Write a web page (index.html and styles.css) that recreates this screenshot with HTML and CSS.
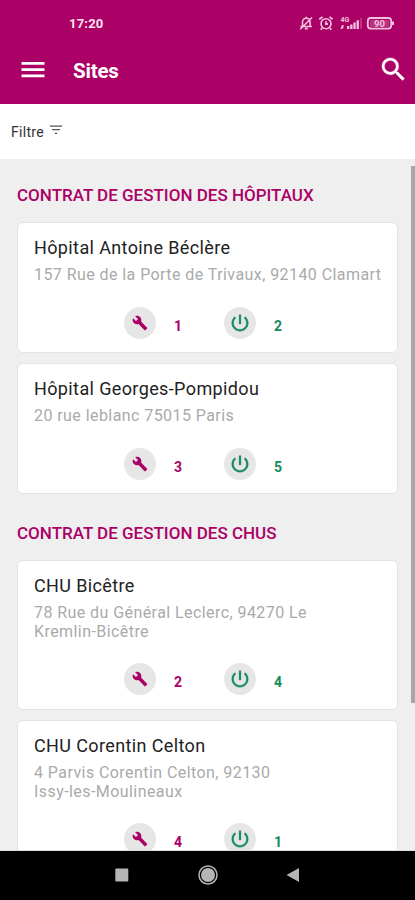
FILE: index.html
```html
<!DOCTYPE html>
<html lang="fr">
<head>
<meta charset="utf-8">
<title>Sites</title>
<link rel="stylesheet" href="styles.css">
</head>
<body>
<svg class="sprite" aria-hidden="true">
  <symbol id="wrench" viewBox="0 0 24 24"><path d="M22.7 19l-9.1-9.1c.9-2.3.4-5-1.5-6.9-2-2-5-2.4-7.4-1.3L9 6 6 9 1.6 4.7C.4 7.1.9 10.1 2.9 12.1c1.9 1.9 4.6 2.4 6.9 1.5l9.1 9.1c.4.4 1 .4 1.4 0l2.3-2.3c.5-.4.5-1.1.1-1.4z"/></symbol>
  <symbol id="power" viewBox="0 0 24 24"><path d="M13 3h-2v10h2V3zm4.83 2.17l-1.42 1.42C17.99 7.86 19 9.81 19 12c0 3.87-3.13 7-7 7s-7-3.13-7-7c0-2.19 1.01-4.14 2.58-5.42L6.17 5.17C4.23 6.82 3 9.26 3 12c0 4.97 4.03 9 9 9s9-4.03 9-9c0-2.74-1.23-5.18-3.17-6.83z"/></symbol>
</svg>
<div class="screen">
  <header class="top">
    <div class="status">
      <span class="clock">17:20</span>
      <svg class="status-icons" width="98" height="18" viewBox="0 0 98 18">
        <g fill="none" stroke="#f0c3dd" stroke-width="1.6">
          <path d="M2.500 12.500h11.500M4.500 12V8a3.800 3.800 0 0 1 7.600 0v4M8.300 2.800v1.500M6.800 14.600h3M2.200 15.200L14 3.500"/>
          <circle cx="28" cy="9.700" r="5"/>
          <path d="M21.300 5.300l3.200-2.400M34.700 5.300l-3.200-2.400M28 7.300v2.700h2M24 14l-1.200 1.700M32 14l1.200 1.700" stroke-width="1.800"/>
          <rect x="69.800" y="4" width="23.400" height="10.600" rx="3" stroke-width="1.800"/>
        </g>
        <g fill="#f0c3dd">
          <path d="M49 12h2.300v3H49zM52.200 10.500h2.300V15h-2.300zM55.400 8.500h2.300V15h-2.300zM58.600 6.300h2.300V15h-2.300zM94 7.500h2v3.500h-2zM44 11h1.500v2.500l-1.500 1.500h-1.500z"/>
          <path d="M62.500 4h1v11h-1z" opacity=".5"/>
          <rect x="71.800" y="5.900" width="19.600" height="7" rx="1.500" opacity=".25"/>
          <text class="net" x="42.500" y="8">4G</text>
          <text class="level" x="76" y="12.700">90</text>
        </g>
      </svg>
    </div>
    <div class="appbar">
      <svg class="menu" width="24" height="18" viewBox="0 0 24 18"><path fill="#fff" d="M.5 1h23v2.700H.5zM.5 7.200h23v2.700H.5zM.5 13.500h23v2.700H.5z"/></svg>
      <h1>Sites</h1>
      <svg class="search" width="31" height="31" viewBox="0 0 24 24"><path fill="#fff" stroke="#fff" stroke-width=".3" d="M15.500 14h-.79l-.28-.27A6.470 6.470 0 0 0 16 9.500 6.500 6.500 0 1 0 9.500 16c1.610 0 3.090-.59 4.230-1.570l.27.28v.79l5 4.990L20.490 19l-4.990-5zm-6 0C7.010 14 5 11.990 5 9.500S7.010 5 9.500 5 14 7.010 14 9.500 11.990 14 9.500 14z"/></svg>
    </div>
  </header>
  <div class="filter">Filtre
    <svg width="12" height="10" viewBox="0 0 12 10"><path fill="#555" d="M0 .5h12v1.200H0zM2 4h8v1.200H2zM4.800 7.700h2.400v1.200H4.800z"/></svg>
  </div>
  <main class="list">
    <h2>CONTRAT DE GESTION DES HÔPITAUX</h2>
    <article class="card">
      <h3>Hôpital Antoine Béclère</h3>
      <p>157 Rue de la Porte de Trivaux, 92140 Clamart</p>
      <div class="stats">
        <span class="dot"><svg class="wrench"><use href="#wrench"/></svg></span><b class="pink">1</b>
        <span class="dot"><svg class="power"><use href="#power"/></svg></span><b class="green">2</b>
      </div>
    </article>
    <article class="card">
      <h3>Hôpital Georges-Pompidou</h3>
      <p>20 rue leblanc 75015 Paris</p>
      <div class="stats">
        <span class="dot"><svg class="wrench"><use href="#wrench"/></svg></span><b class="pink">3</b>
        <span class="dot"><svg class="power"><use href="#power"/></svg></span><b class="green">5</b>
      </div>
    </article>
    <h2 class="next">CONTRAT DE GESTION DES CHUS</h2>
    <article class="card tall">
      <h3>CHU Bicêtre</h3>
      <p>78 Rue du Général Leclerc, 94270 Le<br>Kremlin-Bicêtre</p>
      <div class="stats">
        <span class="dot"><svg class="wrench"><use href="#wrench"/></svg></span><b class="pink">2</b>
        <span class="dot"><svg class="power"><use href="#power"/></svg></span><b class="green">4</b>
      </div>
    </article>
    <article class="card tall">
      <h3>CHU Corentin Celton</h3>
      <p>4 Parvis Corentin Celton, 92130<br>Issy-les-Moulineaux</p>
      <div class="stats">
        <span class="dot"><svg class="wrench"><use href="#wrench"/></svg></span><b class="pink">4</b>
        <span class="dot"><svg class="power"><use href="#power"/></svg></span><b class="green">1</b>
      </div>
    </article>
    <div class="scrollbar"></div>
  </main>
  <nav class="navbar">
    <svg width="14" height="14" viewBox="0 0 14 14"><rect x=".3" y=".5" width="13" height="13" rx="1" fill="#b5b5b5"/></svg>
    <svg width="20" height="20" viewBox="0 0 20 20"><circle cx="10" cy="10" r="9" fill="none" stroke="#b5b5b5" stroke-width="1.500"/><circle cx="10" cy="10" r="7" fill="#b5b5b5"/></svg>
    <svg width="14" height="16" viewBox="0 0 14 16"><path d="M.5 8L13 1v14z" fill="#b5b5b5"/></svg>
  </nav>
</div>
</body>
</html>
```

FILE: styles.css
```css
* { box-sizing: border-box; }
body { margin: 0; font-family: Roboto, "Liberation Sans", sans-serif; }
h1, h2, h3, p { margin: 0; }
.sprite { position: absolute; width: 0; height: 0; }
.screen { width: 415px; height: 900px; display: flex; flex-direction: column; overflow: hidden; }

.top { height: 104px; background: #ab0066; color: #fff; flex: none; }
.status { height: 46px; display: flex; justify-content: space-between; padding: 14px 19px 0 69px; }
.clock { font-size: 13px; font-weight: 700; line-height: 20px; letter-spacing: .2px; color: #fbe3f0; }
.status-icons { display: block; }
.net { font: 700 7px Roboto, sans-serif; }
.level { font: 700 9.500px Roboto, sans-serif; }
.appbar { height: 48px; display: flex; align-items: center; padding: 0 6px 0 21px; }
.appbar h1 { flex: 1; margin: 2px 0 0 28px; font-size: 20.5px; font-weight: 700; line-height: 28px; letter-spacing: -.2px; }
.search { margin-bottom: 1px; }

.filter { height: 55px; flex: none; padding: 18px 0 0 11px; background: #fff; color: #333; font-size: 14px; line-height: 20px; letter-spacing: .3px; display: flex; gap: 6px; }
.filter svg { margin-top: 3px; }

.list { flex: 1; min-height: 0; position: relative; overflow: hidden; background: #efefef; padding: 24px 17px 0; border-bottom: 1px solid #ddd; }
.list h2 { font-size: 17px; font-weight: 500; line-height: 24px; color: #ab0066; margin-bottom: 15px; }
.list h2.next { margin-top: 27px; }
.card { height: 131px; background: #fff; border: 1px solid #e4e4e4; border-radius: 6px; padding: 13px 16px 0; margin-bottom: 10px; }
.card.tall { height: 150px; }
.card h3 { font-size: 18px; font-weight: 400; line-height: 24px; letter-spacing: .38px; color: #222; }
.card p { font-size: 16px; line-height: 19px; letter-spacing: .43px; color: #aaa; margin-top: 5px; white-space: nowrap; }
.stats { display: flex; align-items: center; margin: 23px 0 0 90px; }
.tall .stats { margin-top: 22px; }
.dot { width: 32px; height: 32px; border-radius: 50%; background: #e6e6e6; display: flex; align-items: center; justify-content: center; }
.wrench { width: 16px; height: 16px; fill: #ab0066; }
.power { width: 22px; height: 22px; fill: #168a5b; stroke: #168a5b; stroke-width: .4; }
.stats b { width: 10px; margin: 6px 41px 0 17px; font-size: 14px; line-height: 20px; text-align: center; }
.pink { color: #ab0066; }
.green { color: #168a5b; }
.scrollbar { position: absolute; top: 7px; right: 0; width: 4px; height: 537px; background: #a6a6a6; }

.navbar { height: 49px; flex: none; background: #000; display: flex; align-items: center; padding: 0 115px 2px; justify-content: space-between; }
```
